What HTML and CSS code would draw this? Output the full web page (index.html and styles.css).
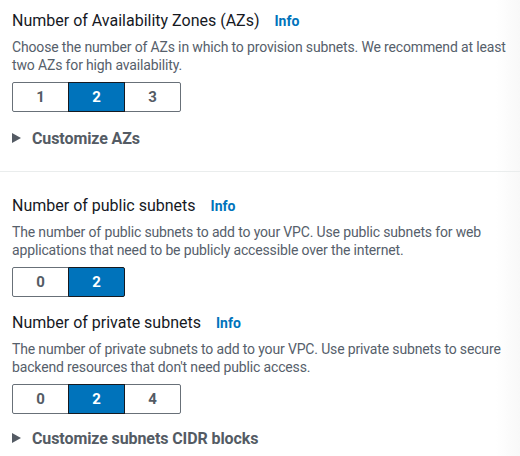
FILE: index.html
```html
<!DOCTYPE html>
<html lang="en">
<head>
<meta charset="utf-8">
<title>VPC settings</title>
<link rel="stylesheet" href="styles.css">
</head>
<body>
<div class="page">
  <section class="field">
    <div class="label"><span class="label-text">Number of Availability Zones (AZs)</span><a class="info" href="#">Info</a></div>
    <p class="desc">Choose the number of AZs in which to provision subnets. We recommend at least two AZs for high availability.</p>
    <div class="seg">
      <button class="seg-btn">1</button><button class="seg-btn on">2</button><button class="seg-btn">3</button>
    </div>
  </section>
  <div class="expander">
    <svg class="caret" width="9" height="10" viewBox="0 0 9 10"><path d="M0 0 L9 5 L0 10 Z" fill="#545b64"/></svg>
    <span>Customize AZs</span>
  </div>
  <div class="divider"></div>
  <section class="field">
    <div class="label"><span class="label-text">Number of public subnets</span><a class="info" href="#">Info</a></div>
    <p class="desc">The number of public subnets to add to your VPC. Use public subnets for web applications that need to be publicly accessible over the internet.</p>
    <div class="seg">
      <button class="seg-btn">0</button><button class="seg-btn on">2</button>
    </div>
  </section>
  <section class="field field-next">
    <div class="label"><span class="label-text">Number of private subnets</span><a class="info" href="#">Info</a></div>
    <p class="desc">The number of private subnets to add to your VPC. Use private subnets to secure backend resources that don't need public access.</p>
    <div class="seg">
      <button class="seg-btn">0</button><button class="seg-btn on">2</button><button class="seg-btn">4</button>
    </div>
  </section>
  <div class="expander expander-last">
    <svg class="caret" width="9" height="10" viewBox="0 0 9 10"><path d="M0 0 L9 5 L0 10 Z" fill="#545b64"/></svg>
    <span>Customize subnets CIDR blocks</span>
  </div>
</div>
</body>
</html>
```

FILE: styles.css
```css
html, body {
  margin: 0;
  padding: 0;
  background: #ffffff;
}
body {
  width: 520px;
  height: 456px;
  overflow: hidden;
  font-family: Roboto, "Liberation Sans", sans-serif;
  background: linear-gradient(to right, #ffffff 0, #ffffff 496px, #fcfcfc 506px, #f8f8f8 520px);
}
.page {
  padding: 10px 10px 0 12px;
}
.field {
  display: flex;
  flex-direction: column;
  align-items: flex-start;
}
.field-next {
  margin-top: 15px;
}
.label {
  display: flex;
  align-items: baseline;
  gap: 15px;
  height: 22px;
  line-height: 22px;
}
.label-text {
  font-size: 16px;
  color: #16191f;
}
.info {
  font-size: 14px;
  font-weight: 700;
  color: #0073bb;
  text-decoration: none;
}
.desc {
  margin: 6px 0 0 0;
  font-size: 14px;
  line-height: 18px;
  letter-spacing: -0.15px;
  color: #56606b;
}
.seg {
  margin-top: 8px;
  display: flex;
}
.seg-btn {
  width: 57px;
  height: 30px;
  margin: 0 0 0 -1px;
  padding: 0;
  border: 1px solid #687078;
  background: #ffffff;
  color: #545b64;
  font-family: inherit;
  font-size: 15px;
  font-weight: 700;
  line-height: 28px;
}
.seg-btn:first-child {
  margin-left: 0;
  border-radius: 2px 0 0 2px;
}
.seg-btn:last-child {
  border-radius: 0 2px 2px 0;
}
.seg-btn.on {
  background: #0073bb;
  border-color: #16191f;
  color: #ffffff;
  position: relative;
  z-index: 1;
}
.expander {
  margin-top: 16px;
  display: flex;
  align-items: center;
  gap: 11px;
  height: 20px;
  font-size: 16px;
  font-weight: 700;
  letter-spacing: -0.1px;
  color: #545b64;
}
.expander-last {
  margin-top: 14px;
}
.divider {
  margin: 23px -10px 0 -12px;
  height: 1px;
  background: #eaeded;
}
.divider + .field {
  margin-top: 23px;
}
```
